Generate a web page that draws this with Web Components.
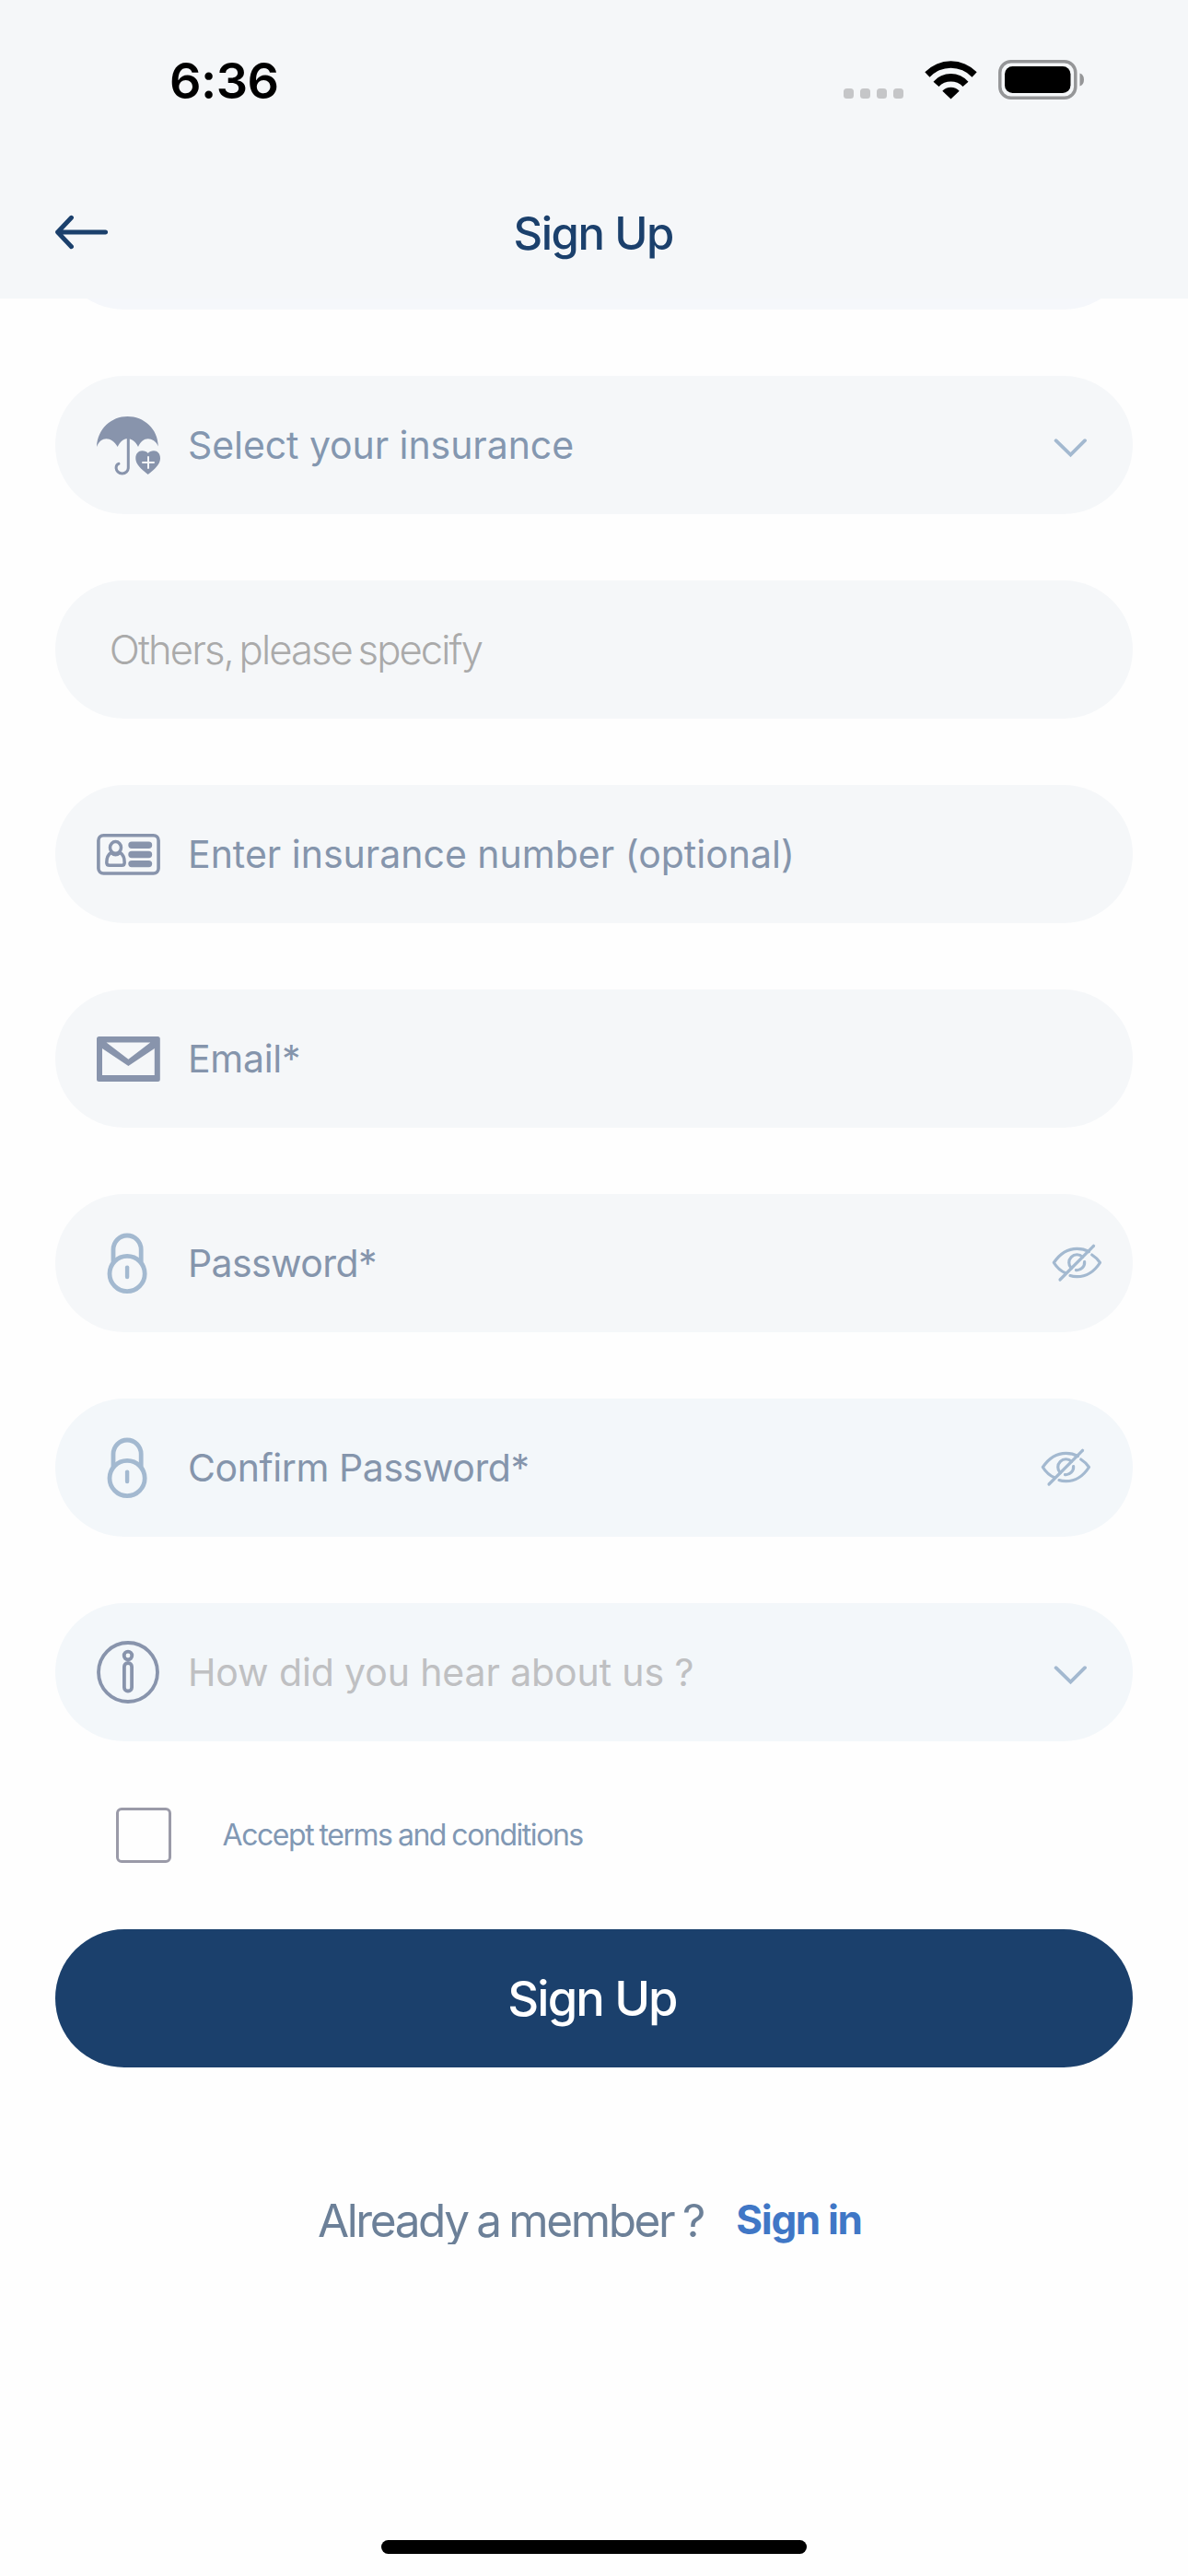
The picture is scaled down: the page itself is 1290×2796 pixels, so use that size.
<!DOCTYPE html>
<html lang="en">
<head>
<meta charset="utf-8">
<title>Sign Up</title>
<style>
  html, body { margin: 0; padding: 0; }
  body { width: 1290px; height: 2796px; overflow: hidden; background: #fefefe; font-family: Inter, "Liberation Sans", sans-serif; }
</style>
</head>
<body>
<sign-up-screen></sign-up-screen>

<script>
const ICONS = {
  umbrella: `<svg width="70" height="70" viewBox="0 0 70 70" fill="#8894ac">
    <path d="M1 37C2 17 17 4 34.5 4S67.5 17 67.8 36.5C65.5 31 61 28.3 56.7 28.3S48.5 31.5 46 37C43.5 31.5 39 28 34.5 28S26.5 31.5 23.7 37C20.5 31.5 16 28.3 11.5 28.3S3.5 31 1 37Z"/>
    <path d="M35.3 27V59.5a6.6 6.6 0 0 1-13.2 0q0-3.2 2.8-4.2" fill="none" stroke="#8894ac" stroke-width="3" stroke-linecap="round"/>
    <path d="M56.7 67C51.5 62.5 43.3 57 43.3 49.5C43.3 44.3 46.5 41.3 50.3 41.3C53 41.3 55.5 42.2 56.7 44C58 42.2 60.5 41.3 63 41.3C67 41.3 70 44.3 70 49.5C70 57 62 62.5 56.7 67Z"/>
    <path d="M57 48V60M51 54H63" stroke="#f5f7f9" stroke-width="2" stroke-linecap="round"/></svg>`,
  card: `<svg width="70" height="70" viewBox="0 0 70 70" fill="none" stroke="#8894ac">
    <rect x="2.9" y="14.7" width="65.2" height="41.300" rx="5.500" stroke-width="3.600"/>
    <ellipse cx="21.500" cy="27.900" rx="6" ry="6.300" stroke-width="3.500"/>
    <path d="M16.500 33.500C12.700 36 11.800 40 11.800 44.200Q11.800 47.300 15 47.300H28.300Q31.200 47.300 31.200 44.200C31.200 40 30.300 36 26.500 33.500Q21.500 38 16.500 33.500Z" stroke-width="3.500" stroke-linejoin="round"/>
    <path d="M39 25.300H57.500M39 35.500H57.500M39 45.600H57.500" stroke-width="7.400" stroke-linecap="round"/></svg>`,
  mail: `<svg width="70" height="70" viewBox="0 0 70 70">
    <path fill="#8894ac" fill-rule="evenodd" d="M3.500 11H67.300Q69.800 11 69.800 13.500V57.500Q69.800 60 67.300 60H3.500Q1 60 1 57.500V13.500Q1 11 3.500 11ZM11.500 17.500L35.400 35.700L59.300 17.500ZM7 24V53H63.800V24L35.400 43Z"/></svg>`,
  lock: `<svg width="70" height="70" viewBox="0 0 70 70" fill="none" stroke="#a3b9d0" stroke-width="4.800">
    <circle cx="34.100" cy="46.500" r="19.100"/>
    <path d="M19 34.500V20.300a15.100 15.300 0 0 1 30.200 0V34.500"/>
    <path d="M34.100 39.600V50" stroke-linecap="round" stroke-width="4.400"/></svg>`,
  info: `<svg width="70" height="70" viewBox="0 0 70 70" fill="none" stroke="#8894ac" stroke-width="3.800">
    <circle cx="35" cy="35" r="32"/>
    <circle cx="35" cy="17" r="4.300"/>
    <rect x="30.900" y="25" width="8.200" height="30.500" rx="4.100"/></svg>`,
  chevron: `<svg width="36" height="70" viewBox="0 0 36 70" fill="none" stroke="#a3b9d0" stroke-width="3.800" stroke-linecap="round">
    <path d="M2.600 30.200L18.500 45.500L34 30.200"/></svg>`,
  eye: `<svg width="60" height="54" viewBox="0 0 60 54" fill="none" stroke="#a3b9d0" stroke-width="3.200" stroke-linecap="round" stroke-linejoin="round">
    <path d="M17 37.800C11.500 35.500 7.500 31.500 4.300 26.500C11 16.500 19.500 11.300 29.500 11.300C34 11.300 38.500 12.300 42.500 14.500"/>
    <path d="M47.500 8.300L11 45"/>
    <path d="M45.700 18C49.500 20.300 52 23 54.500 26.500C48 36.500 39 41.700 29.500 41.700C26.500 41.700 24.200 41.400 22 40.600"/>
    <path d="M23.300 32.500A8.400 8.400 0 0 1 35.500 20.300"/>
    <path d="M37.600 25.500A8.400 8.400 0 0 1 28.500 34.700"/></svg>`
};

class StatusBar extends HTMLElement {
  constructor() {
    super();
    this.attachShadow({ mode: 'open' }).innerHTML = `
      <style>
        :host { display: flex; align-items: center; justify-content: space-between; height: 173px; padding: 0 113px 0 184px; box-sizing: border-box; }
        .time { font-size: 54px; font-weight: 600; letter-spacing: -.5px; line-height: 64px; padding-top: 3px; color: #000; }
        svg { display: block; }
      </style>
      <span class="time">6:36</span>
      <svg width="261" height="43" viewBox="0 0 261 43">
        <g fill="#c5c6c8">
          <rect x="0" y="31" width="11" height="11" rx="3.500"/><rect x="18" y="31" width="11" height="11" rx="3.500"/>
          <rect x="36" y="31" width="11" height="11" rx="3.500"/><rect x="54" y="31" width="11" height="11" rx="3.500"/>
        </g>
        <g transform="translate(88 0)">
          <path d="M0.300 13.300A39.200 39.200 0 0 1 56.700 13.300L51.500 18.700A31.500 31.500 0 0 0 5.500 18.700Z"/>
          <path d="M9.500 23.800A24.900 24.900 0 0 1 47.500 23.800L41.500 29A17.900 17.900 0 0 0 15.500 29Z"/>
          <path d="M19.300 33.700A12.500 12.500 0 0 1 37.700 33.700L28.500 42.500Z"/>
        </g>
        <rect x="169.800" y="1.800" width="82" height="39.400" rx="12" fill="none" stroke="#959698" stroke-width="3.500"/>
        <rect x="175" y="7" width="71.500" height="29" rx="8.500"/>
        <path d="M256.500 14.500C259.500 15.500 261 18 261 21.500S259.500 27.500 256.500 28.500Z" fill="#959698"/>
      </svg>`;
  }
}
customElements.define('status-bar', StatusBar);

class NavBar extends HTMLElement {
  constructor() {
    super();
    this.attachShadow({ mode: 'open' }).innerHTML = `
      <style>
        :host { display: grid; grid-template-columns: 1fr auto 1fr; align-items: center; height: 144px; margin-top: 7px; padding: 0 60px; color: #1b406c; }
        h1 { margin: 0; padding: 4px 1.600px 0 0; font-size: 49px; font-weight: 500; letter-spacing: -1.440px; line-height: 60px; }
        svg { display: block; }
      </style>
      <svg width="57" height="40" viewBox="0 0 57 40" fill="none" stroke="currentColor" stroke-width="4.900" stroke-linecap="round" stroke-linejoin="round">
        <path d="M17.500 4.300L2.600 20L17.500 35.700M2.600 20H54.600"/></svg>
      <h1><slot></slot></h1>`;
  }
}
customElements.define('nav-bar', NavBar);

class FormField extends HTMLElement {
  constructor() {
    super();
    const icon = this.getAttribute('icon');
    const end = this.getAttribute('end');
    this.attachShadow({ mode: 'open' }).innerHTML = `
      <style>
        :host { display: flex; align-items: center; flex: none; height: 150px; box-sizing: border-box; border-radius: 75px;
                padding: 0 var(--end-pad, 50px) 0 44px; background: var(--fill, #f5f7f9); color: var(--ink, #8595ac);
                font-size: 41px; letter-spacing: var(--track, 0); }
        :host([plain]) { padding-left: 58.800px; padding-top: 2px; font-size: 43.600px; font-weight: 300; word-spacing: -3.800px; }
        .lead { margin-right: 30px; }
        .label { flex: 1; white-space: pre; line-height: 54px; }
        svg { display: block; flex: none; }
      </style>
      ${icon ? `<span class="lead">${ICONS[icon]}</span>` : ''}
      <span class="label"><slot></slot></span>
      ${end ? ICONS[end] : ''}`;
  }
}
customElements.define('form-field', FormField);

class TermsCheck extends HTMLElement {
  constructor() {
    super();
    this.attachShadow({ mode: 'open' }).innerHTML = `
      <style>
        :host { display: flex; align-items: center; flex: none; gap: 55.500px; height: 60px; padding-left: 66px; }
        .box { width: 60px; height: 60px; box-sizing: border-box; border: 3px solid #9a9aa8; border-radius: 6px; }
        .text { font-size: 32px; letter-spacing: -1.450px; word-spacing: -1.200px; line-height: 40px; color: #8198b4; }
      </style>
      <span class="box"></span><span class="text"><slot></slot></span>`;
  }
}
customElements.define('terms-check', TermsCheck);

class PrimaryButton extends HTMLElement {
  constructor() {
    super();
    this.attachShadow({ mode: 'open' }).innerHTML = `
      <style>
        :host { display: flex; align-items: center; justify-content: center; flex: none; height: 150px; border-radius: 75px;
                box-sizing: border-box; padding-right: 4px; background: #1b406c; color: #fff; font-size: 52.500px; font-weight: 500; letter-spacing: -1.890px; }
      </style>
      <span><slot></slot></span>`;
  }
}
customElements.define('primary-button', PrimaryButton);

class MemberPrompt extends HTMLElement {
  constructor() {
    super();
    this.attachShadow({ mode: 'open' }).innerHTML = `
      <style>
        :host { display: flex; align-items: flex-start; flex: none; margin-top: 58px; padding-left: 285px; gap: 35.500px; white-space: pre; }
        .ask { height: 62px; overflow: hidden; font-size: 49.500px; letter-spacing: -2.400px; word-spacing: -1.900px; line-height: 72px; color: #6c8098; }
        .link { font-size: 44px; font-weight: 700; letter-spacing: -1.330px; line-height: 70px; color: #4077c6; }
      </style>
      <span class="ask"><slot></slot></span><span class="link"><slot name="link"></slot></span>`;
  }
}
customElements.define('member-prompt', MemberPrompt);

class SignUpScreen extends HTMLElement {
  constructor() {
    super();
    this.attachShadow({ mode: 'open' }).innerHTML = `
      <style>
        :host { display: flex; flex-direction: column; width: 1290px; height: 2796px; }
        header { height: 324px; flex: none; background: #f5f7f9; }
        main { flex: 1; display: flex; flex-direction: column; gap: 72px; padding: 0 60px; overflow: hidden; }
        .scrolled { margin-top: -138px; }
        .home { flex: none; align-self: center; width: 462px; height: 15px; margin-bottom: 24px; border-radius: 8px; background: #000; }
      </style>
      <header><status-bar></status-bar><nav-bar>Sign Up</nav-bar></header>
      <main>
        <form-field class="scrolled" style="--fill:#f5f7fb"></form-field>
        <form-field icon="umbrella" end="chevron" style="--track:-.07px;--ink:#8497b0">Select your insurance</form-field>
        <form-field plain style="--track:-1.900px;--ink:#aaaaaa">Others, please specify</form-field>
        <form-field icon="card" style="--track:0px">Enter insurance number (optional)</form-field>
        <form-field icon="mail" style="--track:-.3px">Email*</form-field>
        <form-field icon="lock" end="eye" style="--track:-.6px;--end-pad:30px">Password*</form-field>
        <form-field icon="lock" end="eye" style="--track:-.42px;--end-pad:42px;--fill:#f3f7fa">Confirm Password*</form-field>
        <form-field icon="info" end="chevron" style="--track:-.12px;--fill:#f3f7fa;--ink:#bfc0c2">How did you hear about us ?</form-field>
        <terms-check>Accept terms and conditions</terms-check>
        <primary-button>Sign Up</primary-button>
        <member-prompt>Already a member ?<span slot="link">Sign in</span></member-prompt>
      </main>
      <div class="home"></div>`;
  }
}
customElements.define('sign-up-screen', SignUpScreen);
</script>
</body>
</html>
